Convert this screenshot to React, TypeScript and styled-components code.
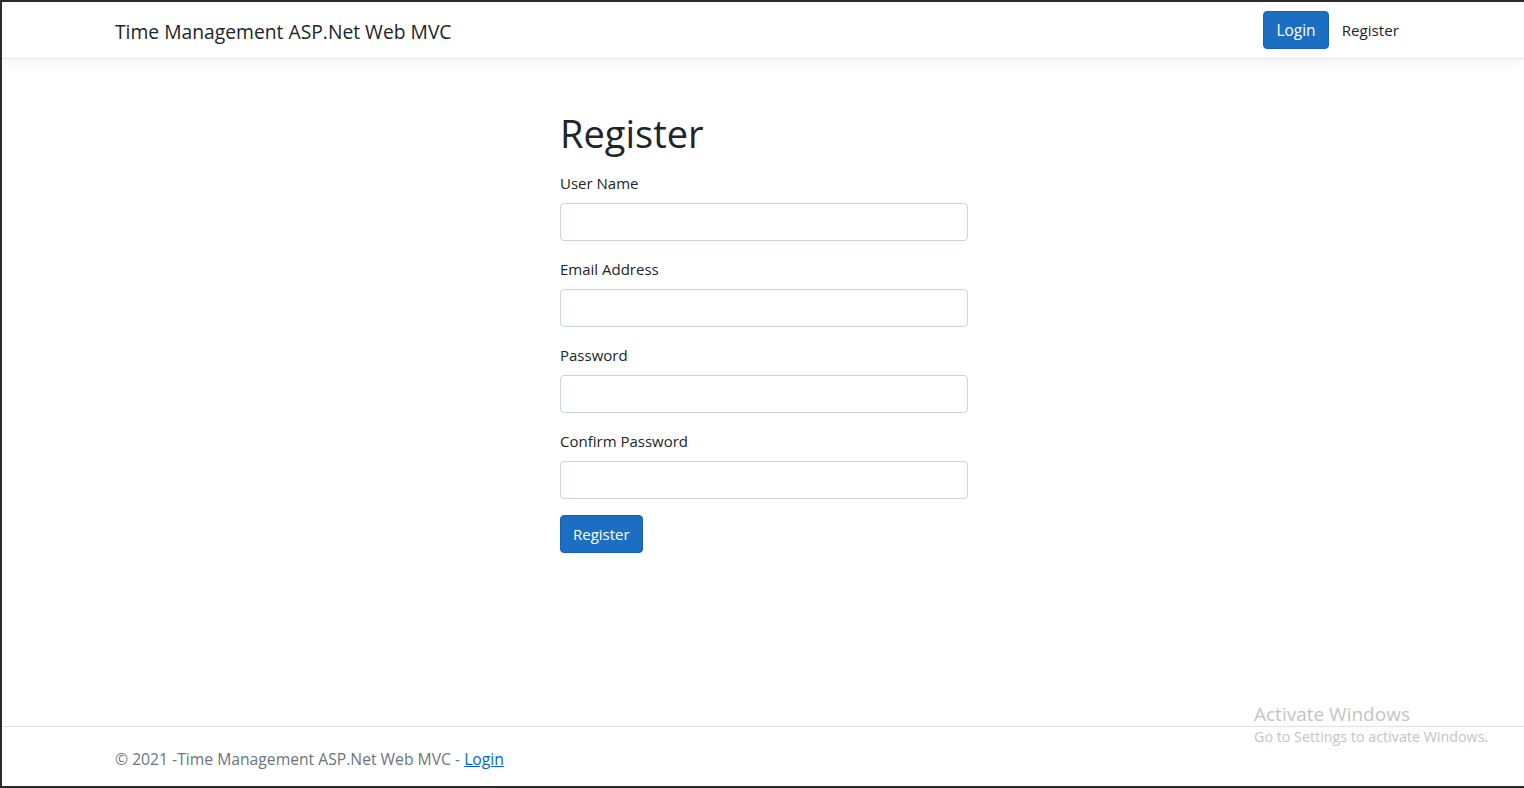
import React from "react";
import styled, { createGlobalStyle } from "styled-components";

const GlobalStyle = createGlobalStyle`
  html, body { margin: 0; padding: 0; }
  body {
    font-family: "Open Sans", "Noto Sans", "Liberation Sans", sans-serif;
    font-size: 16px;
    line-height: 1.5;
    color: #212529;
    background: #fff;
  }
  *, *::before, *::after { box-sizing: border-box; }
`;

const Frame = styled.div`
  height: 788px;
  border-top: 2px solid #2b2b2b;
  border-left: 2px solid #2b2b2b;
  border-bottom: 2px solid #2b2b2b;
  display: flex;
  flex-direction: column;
  position: relative;
  overflow: hidden;
`;

const Header = styled.header`
  height: 57px;
  border-bottom: 1px solid #e5e5e5;
  box-shadow: 0 4px 12px rgba(0, 0, 0, 0.05);
  display: flex;
`;

const Container = styled.div`
  width: 1320px;
  margin: 0 auto;
  padding: 0 12px;
`;

const NavInner = styled(Container)`
  display: flex;
  align-items: center;
  justify-content: space-between;
  padding-top: 1px;
`;

const Brand = styled.a`
  font-size: 19.3px;
  color: #212529;
  text-decoration: none;
  white-space: nowrap;
  padding-top: 3px;
`;

const NavLinks = styled.nav`
  display: flex;
  align-items: center;
  gap: 5px;
  margin-right: 4px;
`;

const PrimaryButton = styled.button`
  font-family: inherit;
  font-size: 15.5px;
  line-height: 24px;
  color: #fff;
  background: #1b6ec2;
  border: 1px solid #1861ac;
  border-radius: 4px;
  padding: 6px 12px;
  cursor: pointer;
`;

const NavLink = styled.a`
  color: #212529;
  text-decoration: none;
  padding: 8px;
  font-size: 15.2px;
`;

const Main = styled.main`
  flex: 1;
`;

const MainInner = styled(Container)`
  display: grid;
  grid-template-columns: 445px 408px;
  padding-top: 50px;
`;

const FormColumn = styled.form`
  grid-column: 2;
  display: flex;
  flex-direction: column;
  align-items: flex-start;
`;

const Title = styled.h1`
  font-size: 38px;
  font-weight: 400;
  line-height: 48px;
  margin: 0 0 14px;
`;

const Field = styled.div`
  display: flex;
  flex-direction: column;
  width: 100%;
  margin-bottom: 16px;
`;

const Label = styled.label`
  font-size: 15px;
  line-height: 24px;
  margin-bottom: 8px;
`;

const Input = styled.input`
  height: 38px;
  width: 100%;
  border: 1px solid #ced4da;
  border-radius: 4px;
  padding: 6px 12px;
  font-family: inherit;
  font-size: 16px;
`;

const SubmitButton = styled(PrimaryButton)`
  font-size: 15px;
  padding: 6px 12px;
`;

const Footer = styled.footer`
  border-top: 1px solid #dee2e6;
  height: 60px;
  line-height: 64px;
  color: #6c757d;
  font-size: 15.7px;
`;

const FooterLink = styled.a`
  color: #0366d6;
  text-decoration: underline;
`;

const Watermark = styled.div`
  position: absolute;
  left: 1252px;
  top: 699px;
  color: #c4c4c4;
  pointer-events: none;
  font-family: "Open Sans", "Noto Sans", sans-serif;
`;

const WatermarkTitle = styled.div`
  font-size: 19px;
  line-height: 26px;
`;

const WatermarkText = styled.div`
  font-size: 14.3px;
  line-height: 20px;
`;

const fields = ["User Name", "Email Address", "Password", "Confirm Password"];

export default function App() {
  return (
    <>
      <GlobalStyle />
      <Frame>
        <Header>
          <NavInner>
            <Brand href="#">Time Management ASP.Net Web MVC</Brand>
            <NavLinks>
              <PrimaryButton type="button">Login</PrimaryButton>
              <NavLink href="#">Register</NavLink>
            </NavLinks>
          </NavInner>
        </Header>
        <Main>
          <MainInner>
            <FormColumn onSubmit={(e) => e.preventDefault()}>
              <Title>Register</Title>
              {fields.map((f) => (
                <Field key={f}>
                  <Label>{f}</Label>
                  <Input type={f.includes("Password") ? "password" : "text"} />
                </Field>
              ))}
              <SubmitButton type="submit">Register</SubmitButton>
            </FormColumn>
          </MainInner>
        </Main>
        <Footer>
          <Container>
            © 2021 -Time Management ASP.Net Web MVC - <FooterLink href="#">Login</FooterLink>
          </Container>
        </Footer>
        <Watermark>
          <WatermarkTitle>Activate Windows</WatermarkTitle>
          <WatermarkText>Go to Settings to activate Windows.</WatermarkText>
        </Watermark>
      </Frame>
    </>
  );
}
